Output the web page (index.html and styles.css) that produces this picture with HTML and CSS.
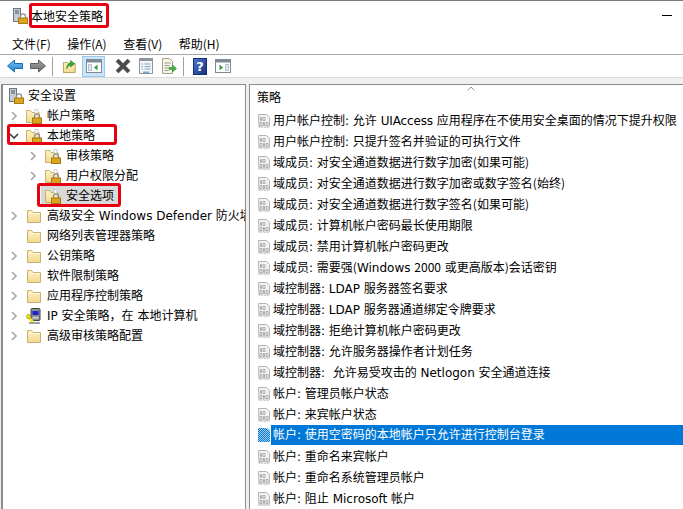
FILE: index.html
```html
<!DOCTYPE html>
<html lang="zh">
<head>
<meta charset="utf-8">
<title>本地安全策略</title>
<link rel="stylesheet" href="styles.css">
</head>
<body>
<svg class="defs" width="0" height="0" aria-hidden="true">
  <defs>
    <linearGradient id="fold" x1="0" y1="0" x2="0" y2="1"><stop offset="0" stop-color="#fdf3c4"/><stop offset="1" stop-color="#f3d98c"/></linearGradient>
    <linearGradient id="blue" x1="0" y1="0" x2="0" y2="1"><stop offset="0" stop-color="#7cc4f5"/><stop offset="1" stop-color="#1c7fd0"/></linearGradient>
    <linearGradient id="gray" x1="0" y1="0" x2="0" y2="1"><stop offset="0" stop-color="#a8a8a8"/><stop offset="1" stop-color="#6a6a6a"/></linearGradient>
    <linearGradient id="helpblue" x1="0" y1="0" x2="1" y2="1"><stop offset="0" stop-color="#4f78d0"/><stop offset="1" stop-color="#142f78"/></linearGradient>
    <pattern id="dither" width="2" height="2" patternUnits="userSpaceOnUse"><rect width="2" height="2" fill="#0078d7"/><rect width="1" height="1" fill="#a9cdea"/><rect x="1" y="1" width="1" height="1" fill="#a9cdea"/></pattern>
    <symbol id="chev-r" viewBox="0 0 10 12"><path d="M3 2l4 4-4 4" fill="none" stroke="#a6a6a6" stroke-width="1.6"/></symbol>
    <symbol id="chev-d" viewBox="0 0 10 12"><path d="M1 4l4 4 4-4" fill="none" stroke="#404040" stroke-width="1.6"/></symbol>
    <symbol id="folder" viewBox="0 0 16 16"><path d="M1.500 2.500h4l1.500 2h7.500v10h-13z" fill="url(#fold)" stroke="#c9b071"/><path d="M2.500 5.500h11" stroke="#fffbe6"/></symbol>
    <symbol id="folderlock" viewBox="0 0 16 16"><path d="M.5 2.500h4l1.500 2h7v10H.5z" fill="url(#fold)" stroke="#c9b071"/><path d="M9 1.500h3v4H9z" fill="#fff" stroke="#bbb" stroke-width=".7"/><path d="M8.500 10V8.300a2.500 2.500 0 0 1 5 0V10" fill="none" stroke="#8d8d8d" stroke-width="1.300"/><rect x="6.500" y="10" width="9" height="5.500" fill="#d9a520" stroke="#a77a12"/></symbol>
    <symbol id="server" viewBox="0 0 16 16"><rect x="1.500" y=".5" width="7" height="13" fill="#c5ccd3" stroke="#6d7780"/><path d="M3 3h4M3 5h4" stroke="#4f5a64"/><path d="M8.500 10V8.300a2.500 2.500 0 0 1 5 0V10" fill="none" stroke="#8d8d8d" stroke-width="1.300"/><rect x="6.500" y="10" width="9" height="5.500" fill="#d9a520" stroke="#a77a12"/></symbol>
    <symbol id="ip" viewBox="0 0 16 16"><rect x="5" y=".5" width="9" height="12" rx="1" fill="#8b9097" stroke="#3f4348"/><rect x="6.500" y="3" width="6" height="4" fill="#1a23c9"/><rect x="6.500" y="9" width="6" height="1.500" fill="#d6d6d6"/><path d="M1 8l6 6" stroke="#f5e21a" stroke-width="2.600"/><circle cx="2.500" cy="8.500" r="2" fill="#f5e21a" stroke="#8d8216" stroke-width=".6"/><path d="M3 15h11" stroke="#3f4348"/></symbol>
    <symbol id="policy" viewBox="0 0 14 16"><path d="M1.500 1.500h8l3 3v9l-1.500 1-1.500-1-1.500 1-1.500-1-1.500 1-1.500-1-1.500 1z" fill="#f2f2f2" stroke="#b5b5b5"/><path d="M3.500 4.500h1v3h-1zM6 4.500h2v3H6zM3 9.500h2v3H3zM6.500 9.500h1v3h-1zM9 9.500h2v3H9z" fill="none" stroke="#a0a0a0" stroke-width=".8"/></symbol>
    <symbol id="back" viewBox="0 0 16 14"><path d="M.5 7L7.500 1v3.500h8v5h-8V13z" fill="url(#blue)" stroke="#1a6cb0"/></symbol>
    <symbol id="fwd" viewBox="0 0 16 14"><path d="M15.500 7L8.500 1v3.500h-8v5h8V13z" fill="url(#gray)" stroke="#5f5f5f"/></symbol>
    <symbol id="up" viewBox="0 0 16 16"><path d="M1.500 4.500h5l1 1h6.500v9.500h-12.500z" fill="url(#fold)" stroke="#b89a55"/><path d="M5 11c0-4 2-6 4-6.500V2l4.500 3.500L9 9V6.800C7.500 7.200 6 8.800 5 11z" fill="#38a82e" stroke="#217a1b" stroke-width=".6"/></symbol>
    <symbol id="paneleft" viewBox="0 0 16 16"><rect x=".5" y="1.500" width="15" height="13" fill="#fff" stroke="#7f8a96"/><rect x="1" y="2" width="14" height="2.500" fill="#7f8a96"/><path d="M2.500 6.500h3v6h-3z" fill="#dfe7f0" stroke="#8aa0b8" stroke-width=".6"/><path d="M11.500 6.500v6L8 9.500z" fill="#2f9e3f"/></symbol>
    <symbol id="x" viewBox="0 0 16 16"><path d="M1 3.500L3.500 1 8 5.500 12.500 1 15 3.500 10.500 8l4.500 4.500-2.500 2.500L8 10.500 3.500 15 1 12.500 5.500 8z" fill="#4a4a4a" stroke="#3a3a3a" stroke-width=".5"/></symbol>
    <symbol id="props" viewBox="0 0 16 16"><rect x="1.500" y=".5" width="13" height="15" fill="#f4f4f4" stroke="#8d96a0"/><rect x="2" y="1" width="12" height="2" fill="#8d96a0"/><path d="M6.500 6h6M6.500 8.500h6M6.500 11h6" stroke="#7aa4c8"/><path d="M3.500 6h1.500M3.500 8.500h1.500M3.500 11h1.500" stroke="#7aa4c8"/><rect x="5" y="13.500" width="6" height="1.500" fill="#5db0e6"/></symbol>
    <symbol id="export" viewBox="0 0 16 16"><path d="M1.500 .5h7l3 3v12h-10z" fill="#f8f4e2" stroke="#a8a18a"/><path d="M3.500 5h6M3.500 7.500h5M3.500 10h4M3.500 12.500h4" stroke="#9c9c9c"/><path d="M8 9.500h3.500V7l4 3.500-4 3.500v-2.500H8z" fill="#4fb04a" stroke="#2c8628" stroke-width=".6"/></symbol>
    <symbol id="help" viewBox="0 0 14 17"><rect width="13" height="16" x=".5" y=".5" fill="url(#helpblue)" stroke="#142f78"/></symbol>
    <symbol id="paneright" viewBox="0 0 16 16"><rect x=".5" y="1.500" width="15" height="13" fill="#fff" stroke="#7f8a96"/><rect x="1" y="2" width="14" height="2.500" fill="#7f8a96"/><path d="M10.500 6.500h3v6h-3z" fill="#dfe7f0" stroke="#8aa0b8" stroke-width=".6"/><path d="M4.500 6.500v6L8 9.500z" fill="#2f9e3f"/></symbol>
  </defs>
</svg>

<div class="window">
  <header class="titlebar">
    <svg class="title-icon"><use href="#server"/></svg>
    <span class="title-text">本地安全策略</span>
    <span class="minimize"></span>
  </header>

  <nav class="menubar">
    <span class="menu-item">文件(F)</span>
    <span class="menu-item">操作(A)</span>
    <span class="menu-item">查看(V)</span>
    <span class="menu-item">帮助(H)</span>
  </nav>

  <div class="toolbar">
    <svg class="tool tool-back"><use href="#back"/></svg>
    <svg class="tool tool-fwd"><use href="#fwd"/></svg>
    <span class="tool-sep"></span>
    <svg class="tool tool-up"><use href="#up"/></svg>
    <span class="tool-active"><svg class="tool"><use href="#paneleft"/></svg></span>
    <svg class="tool tool-x"><use href="#x"/></svg>
    <svg class="tool tool-props"><use href="#props"/></svg>
    <svg class="tool tool-export"><use href="#export"/></svg>
    <span class="tool-sep tool-sep2"></span>
    <span class="help-btn"><svg class="help-bg"><use href="#help"/></svg><span class="help-q">?</span></span>
    <svg class="tool tool-pane"><use href="#paneright"/></svg>
  </div>

  <div class="strip"></div>

  <main class="panes">
    <aside class="tree">
      <div class="tree-row root"><svg class="tree-icon root-icon"><use href="#server"/></svg><span>安全设置</span></div>
      <div class="tree-row l1"><svg class="chev"><use href="#chev-r"/></svg><svg class="tree-icon"><use href="#folderlock"/></svg><span class="label">帐户策略</span></div>
      <div class="tree-row l1"><svg class="chev"><use href="#chev-d"/></svg><svg class="tree-icon"><use href="#folderlock"/></svg><span class="label">本地策略</span></div>
      <div class="tree-row l2"><svg class="chev"><use href="#chev-r"/></svg><svg class="tree-icon"><use href="#folderlock"/></svg><span class="label">审核策略</span></div>
      <div class="tree-row l2"><svg class="chev"><use href="#chev-r"/></svg><svg class="tree-icon"><use href="#folderlock"/></svg><span class="label">用户权限分配</span></div>
      <div class="tree-row l2"><span class="chev"></span><span class="tree-sel"><svg class="tree-icon"><use href="#folderlock"/></svg><span class="label">安全选项</span></span></div>
      <div class="tree-row l1"><svg class="chev"><use href="#chev-r"/></svg><svg class="tree-icon"><use href="#folder"/></svg><span class="label">高级安全 Windows Defender 防火墙</span></div>
      <div class="tree-row l1"><span class="chev"></span><svg class="tree-icon"><use href="#folder"/></svg><span class="label">网络列表管理器策略</span></div>
      <div class="tree-row l1"><svg class="chev"><use href="#chev-r"/></svg><svg class="tree-icon"><use href="#folder"/></svg><span class="label">公钥策略</span></div>
      <div class="tree-row l1"><svg class="chev"><use href="#chev-r"/></svg><svg class="tree-icon"><use href="#folder"/></svg><span class="label">软件限制策略</span></div>
      <div class="tree-row l1"><svg class="chev"><use href="#chev-r"/></svg><svg class="tree-icon"><use href="#folder"/></svg><span class="label">应用程序控制策略</span></div>
      <div class="tree-row l1"><svg class="chev"><use href="#chev-r"/></svg><svg class="tree-icon"><use href="#ip"/></svg><span class="label">IP 安全策略，在 本地计算机</span></div>
      <div class="tree-row l1"><svg class="chev"><use href="#chev-r"/></svg><svg class="tree-icon"><use href="#folder"/></svg><span class="label">高级审核策略配置</span></div>
    </aside>

    <section class="list">
      <div class="list-head">策略<svg class="sort" viewBox="0 0 8 5"><path d="M.5 4.500L4 1l3.500 3.500" fill="none" stroke="#9a9a9a"/></svg></div>
      <div class="row"><svg class="row-icon"><use href="#policy"/></svg><span class="row-text">用户帐户控制: 允许 <span class="tight">UIAccess</span> 应用程序在不使用安全桌面的情况下提升权限</span></div>
      <div class="row"><svg class="row-icon"><use href="#policy"/></svg><span class="row-text">用户帐户控制: 只提升签名并验证的可执行文件</span></div>
      <div class="row"><svg class="row-icon"><use href="#policy"/></svg><span class="row-text">域成员: 对安全通道数据进行数字加密<span class="cjk">(如果可能)</span></span></div>
      <div class="row"><svg class="row-icon"><use href="#policy"/></svg><span class="row-text">域成员: 对安全通道数据进行数字加密或数字签名<span class="cjk">(始终)</span></span></div>
      <div class="row"><svg class="row-icon"><use href="#policy"/></svg><span class="row-text">域成员: 对安全通道数据进行数字签名<span class="cjk">(如果可能)</span></span></div>
      <div class="row"><svg class="row-icon"><use href="#policy"/></svg><span class="row-text">域成员: 计算机帐户密码最长使用期限</span></div>
      <div class="row"><svg class="row-icon"><use href="#policy"/></svg><span class="row-text">域成员: 禁用计算机帐户密码更改</span></div>
      <div class="row"><svg class="row-icon"><use href="#policy"/></svg><span class="row-text">域成员: 需要强<span class="cjk">(</span>Windows <span class="cjk">2000</span> 或更高版本<span class="cjk">)</span>会话密钥</span></div>
      <div class="row"><svg class="row-icon"><use href="#policy"/></svg><span class="row-text">域控制器: LDAP 服务器签名要求</span></div>
      <div class="row"><svg class="row-icon"><use href="#policy"/></svg><span class="row-text">域控制器: LDAP 服务器通道绑定令牌要求</span></div>
      <div class="row"><svg class="row-icon"><use href="#policy"/></svg><span class="row-text">域控制器: 拒绝计算机帐户密码更改</span></div>
      <div class="row"><svg class="row-icon"><use href="#policy"/></svg><span class="row-text">域控制器: 允许服务器操作者计划任务</span></div>
      <div class="row"><svg class="row-icon"><use href="#policy"/></svg><span class="row-text">域控制器:  允许易受攻击的 Netlogon 安全通道连接</span></div>
      <div class="row"><svg class="row-icon"><use href="#policy"/></svg><span class="row-text">帐户: 管理员帐户状态</span></div>
      <div class="row"><svg class="row-icon"><use href="#policy"/></svg><span class="row-text">帐户: 来宾帐户状态</span></div>
      <div class="row selected"><svg class="row-icon sel-icon" viewBox="0 0 14 16"><path d="M1 1h9l3 3v11H1z" fill="url(#dither)"/></svg><span class="row-text">帐户: 使用空密码的本地帐户只允许进行控制台登录</span></div>
      <div class="row"><svg class="row-icon"><use href="#policy"/></svg><span class="row-text">帐户: 重命名来宾帐户</span></div>
      <div class="row"><svg class="row-icon"><use href="#policy"/></svg><span class="row-text">帐户: 重命名系统管理员帐户</span></div>
      <div class="row"><svg class="row-icon"><use href="#policy"/></svg><span class="row-text">帐户: 阻止 Microsoft 帐户</span></div>
    </section>
  </main>

  <span class="mark mark-title"></span>
  <span class="mark mark-local"></span>
  <span class="mark mark-options"></span>
</div>
</body>
</html>
```

FILE: styles.css
```css
* { box-sizing: border-box; }

html, body {
  margin: 0;
  padding: 0;
  height: 100%;
  overflow: hidden;
  background: #fff;
}

.defs { position: absolute; }

.window {
  position: relative;
  width: 683px;
  height: 509px;
  display: flex;
  flex-direction: column;
  overflow: hidden;
  background: #fff;
  border-top: 1px solid #7a7a7a;
  color: #000;
  font: 12px/16px "DejaVu Sans", "Noto Sans CJK SC", sans-serif;
}

.cjk { font-family: "Noto Sans CJK SC", sans-serif; line-height: 0; }
.tight { letter-spacing: -.15px; }

.titlebar {
  flex: none;
  height: 29px;
  display: flex;
  align-items: center;
  padding: 0 0 0 12px;
}
.title-icon { width: 16px; height: 16px; margin-right: 3px; }
.title-text { flex: 1; padding-top: 2px; }
.minimize {
  width: 10px;
  height: 1px;
  margin: 0 11px 0 0;
  background: #000;
}

.menubar {
  flex: none;
  height: 25px;
  display: flex;
  align-items: center;
  gap: 16.5px;
  padding: 3px 0 0 12px;
  border-bottom: 1px solid #a9a9a9;
  font-family: "Noto Sans CJK SC", sans-serif;
}

.toolbar {
  flex: none;
  height: 23px;
  display: flex;
  align-items: center;
  padding-left: 7px;
  border-bottom: 1px solid #d9d9d9;
}
.tool { width: 16px; height: 16px; flex: none; }
.tool-fwd { margin-left: 7px; }
.tool-sep {
  width: 1px;
  height: 19px;
  margin: 0 9px 0 6px;
  background: #a0a0a0;
}
.tool-up { width: 15px; }
.tool-active {
  display: flex;
  align-items: center;
  justify-content: center;
  width: 23px;
  height: 21px;
  margin-left: 5px;
  background: #cce4f7;
  border: 1px solid #99c9ef;
}
.tool-x { margin-left: 10px; }
.tool-props { margin-left: 7px; }
.tool-export { margin-left: 7px; }
.tool-sep2 { margin-left: 6px; }
.help-btn {
  position: relative;
  display: flex;
  align-items: center;
  justify-content: center;
  width: 14px;
  height: 17px;
}
.help-bg { position: absolute; left: 0; top: 0; width: 14px; height: 17px; }
.help-q {
  position: relative;
  color: #fff;
  font-weight: bold;
  font-size: 13px;
  line-height: 17px;
}
.tool-pane { margin-left: 8px; }

.strip {
  flex: none;
  height: 6px;
  background: #f0f0f0;
}

.panes {
  flex: 1;
  min-height: 0;
  display: flex;
  background: #f0f0f0;
  padding-left: 1px;
}

.tree {
  flex: none;
  width: 245px;
  overflow: hidden;
  padding-top: 1px;
  background: #fff;
  border-top: 1px solid #8c8c8c;
  border-left: 2px solid #8c8c8c;
  border-right: 1px solid #8c8c8c;
}
.tree-row {
  height: 20px;
  display: flex;
  align-items: center;
  white-space: nowrap;
}
.root { padding-left: 5px; }
.l1 { padding-left: 6px; }
.l2 { padding-left: 25px; }
.chev { flex: none; width: 10px; height: 12px; margin-right: 7px; }
.tree-icon { flex: none; width: 16px; height: 16px; }
.root-icon { margin-right: 4px; }
.label { margin-left: 5px; }
.tree-sel {
  display: flex;
  align-items: center;
  height: 20px;
  padding: 0 4px;
  margin-left: -4px;
  background: #d9d9d9;
}

.list {
  flex: 1;
  min-width: 0;
  margin-left: 3px;
  overflow: hidden;
  background: #fff;
  border-top: 1px solid #8c8c8c;
  border-left: 1px solid #8c8c8c;
}
.list-head {
  position: relative;
  height: 25px;
  padding: 5px 0 0 7px;
}
.sort {
  position: absolute;
  left: 217px;
  top: 1px;
  width: 8px;
  height: 5px;
}
.row {
  height: 21px;
  display: flex;
  align-items: center;
  padding-left: 7px;
  white-space: pre;
}
.row-icon { flex: none; width: 14px; height: 16px; }
.row-text { flex: 1; padding: 1px 0 0 2px; }
.selected { align-items: flex-start; }
.selected .sel-icon { margin-top: 2px; }
.selected .row-text {
  height: 20px;
  padding-top: 2px;
  color: #fff;
  background: #0078d7;
}

.mark {
  position: absolute;
  border: 3px solid #e60012;
  border-radius: 3px;
  pointer-events: none;
}
.mark-title { left: 29px; top: 2px; width: 80px; height: 25px; }
.mark-local { left: 7px; top: 123px; width: 110px; height: 21px; }
.mark-options { left: 37px; top: 182px; width: 84px; height: 24px; }
```
